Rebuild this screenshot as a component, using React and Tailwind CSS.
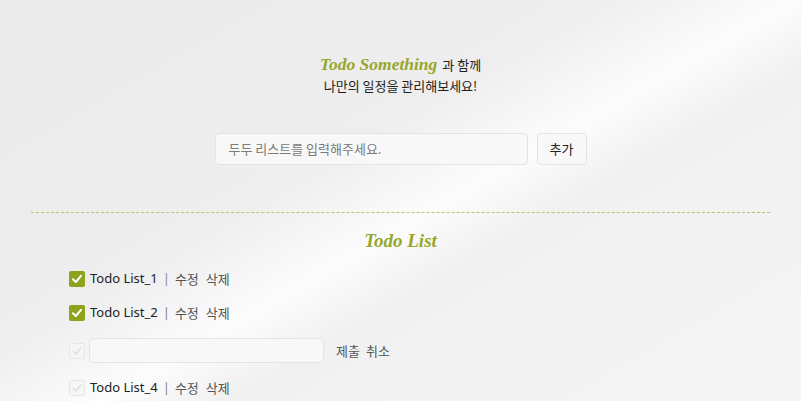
import React from "react";

const todos = [
  { id: 1, text: "Todo List_1", done: true },
  { id: 2, text: "Todo List_2", done: true },
  { id: 3, text: "", done: false, editing: true },
  { id: 4, text: "Todo List_4", done: false },
];

const CheckBox = ({ checked }) => (
  <span
    className={
      checked
        ? "flex h-4 w-4 shrink-0 items-center justify-center rounded-[2px] bg-[#8fa31f]"
        : "flex h-4 w-4 shrink-0 items-center justify-center rounded-[2px] border border-[#e6e6e6] bg-[#f6f6f6]"
    }
  >
    <svg width="12" height="12" viewBox="0 0 12 12" fill="none">
      <path
        d="M2 6.2 L4.8 9 L10 2.8"
        stroke={checked ? "#ffffff" : "#dedede"}
        strokeWidth={checked ? 2 : 1.4}
        strokeLinecap="round"
        strokeLinejoin="round"
      />
    </svg>
  </span>
);

export default function App() {
  return (
    <div
      className="min-h-[401px] w-full overflow-hidden bg-[linear-gradient(150deg,#eaeaea_0%,#eeeeee_40%,#fcfcfc_53%,#f1f1f1_61%,#f5f5f6_100%)] text-[#222]"
      style={{ fontFamily: '"Noto Sans", "Noto Sans CJK KR", sans-serif' }}
    >
      {/* header */}
      <div className="flex flex-col items-center pt-[54px] text-[13px] leading-[21px]">
        <p className="flex items-baseline gap-[5px]">
          <span className="font-['Liberation_Serif',serif] text-[17.5px] font-bold italic text-[#97a62a]">
            Todo Something
          </span>
          <span className="font-['Noto_Sans_CJK_KR',sans-serif]">과 함께</span>
        </p>
        <p className="font-['Noto_Sans_CJK_KR',sans-serif]">나만의 일정을 관리해보세요!</p>
      </div>

      {/* input */}
      <div className="mt-[37px] flex justify-center gap-[9px]">
        <div className="flex h-[32px] w-[313px] items-center rounded-[4px] border border-[#e4e4e4] bg-[#f8f8f8] px-[13px] font-['Noto_Sans_CJK_KR',sans-serif] text-[13px] text-[#7a7a7a]">
          두두 리스트를 입력해주세요.
        </div>
        <button className="h-[32px] w-[50px] rounded-[4px] border border-[#e4e4e4] bg-[#f8f8f8] font-['Noto_Sans_CJK_KR',sans-serif] text-[13px] text-[#222]">
          추가
        </button>
      </div>

      {/* list */}
      <div className="mx-[31px] mt-[47px] border-t border-dashed border-[#b9c466]">
        <h2 className="mt-[16px] text-center font-['Liberation_Serif',serif] text-[19px] font-bold italic leading-[24px] text-[#97a62a]">
          Todo List
        </h2>
        <ul className="mt-[9px] flex flex-col pl-[38px] text-[13px]">
          {todos.map((t) =>
            t.editing ? (
              <li key={t.id} className="flex h-[41px] items-center">
                <CheckBox checked={false} />
                <div className="ml-[4px] h-[25px] w-[235px] rounded-[4px] border border-[#e4e4e4] bg-[#f8f8f8]" />
                <span className="ml-[12px] flex gap-[6px] font-['Noto_Sans_CJK_KR',sans-serif] text-[#555]">
                  <span>제출</span>
                  <span>취소</span>
                </span>
              </li>
            ) : (
              <li key={t.id} className="flex h-[34px] items-center">
                <CheckBox checked={t.done} />
                <span className="ml-[5px] text-[#222]">{t.text}</span>
                <span className="mx-[5px] text-[#888]">|</span>
                <span className="flex gap-[7px] font-['Noto_Sans_CJK_KR',sans-serif] text-[#555]">
                  <span>수정</span>
                  <span>삭제</span>
                </span>
              </li>
            )
          )}
        </ul>
      </div>
    </div>
  );
}
